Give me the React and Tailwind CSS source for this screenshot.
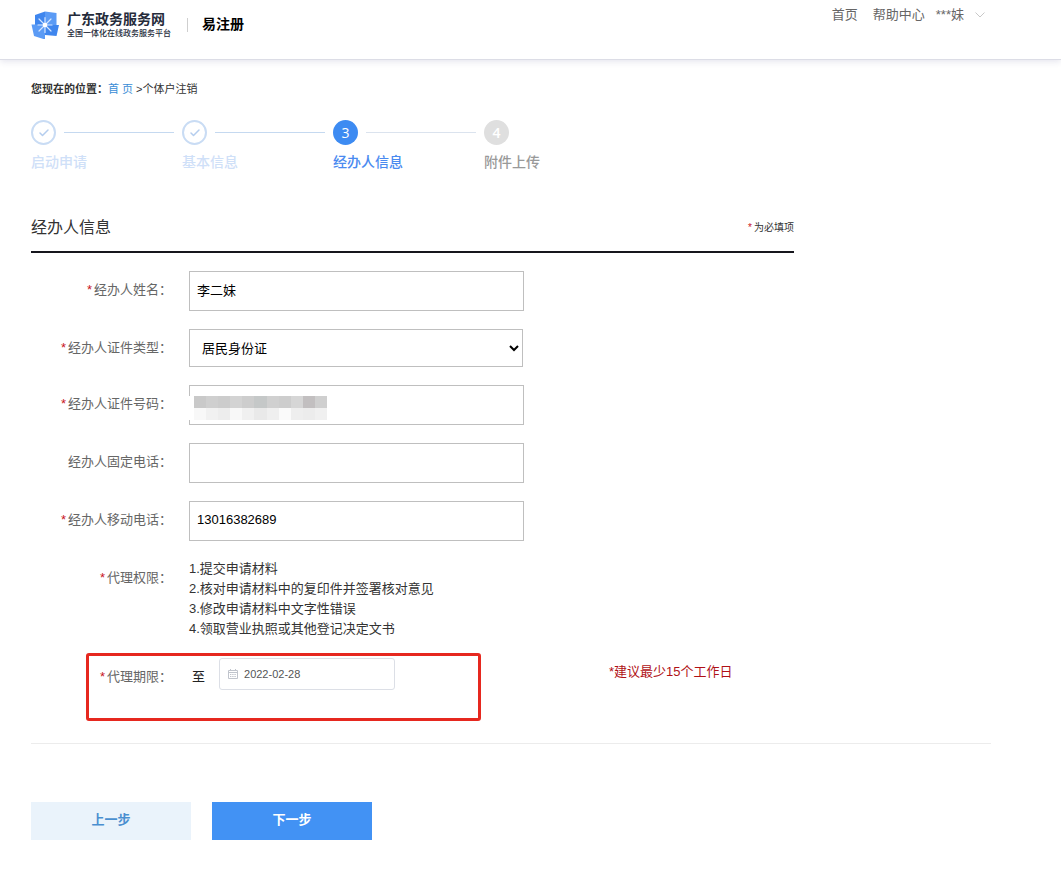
import { useState } from "react";
import { Check } from "lucide-react";
import clsx from "clsx";

const steps = [
  { title: "启动申请", status: "done" },
  { title: "基本信息", status: "done" },
  { title: "经办人信息", status: "current" },
  { title: "附件上传", status: "todo" },
];

const permissions = [
  "1.提交申请材料",
  "2.核对申请材料中的复印件并签署核对意见",
  "3.修改申请材料中文字性错误",
  "4.领取营业执照或其他登记决定文书",
];

// blocks that hide the certificate number
const maskCells = [
  "bg-[#c9c9c9]", "bg-[#cfcfcf]", "bg-[#cccccc]", "bg-[#d3d3d3]", "bg-[#cdcdcd]",
  "bg-[#c5c8c8]", "bg-[#d0d0d0]", "bg-[#cdcdcd]", "bg-[#d6d6d6]", "bg-[#c2bfc0]", "bg-[#cfcfcf]",
  "bg-[#f8f8f8]", "bg-[#f1f1f1]", "bg-[#ededed]", "bg-[#f8f8f8]", "bg-[#f0f0f0]",
  "bg-[#e9e9e9]", "bg-[#efefef]", "bg-[#fafafa]", "bg-[#eeeeee]", "bg-[#ececec]", "bg-[#f0f0f0]",
];

const inputClass =
  "block h-10 w-full max-w-[335px] border border-[#bfbfbf] bg-white px-[7px] pb-[3px] text-[13px] text-black outline-none";

function LogoMark() {
  return (
    <svg viewBox="0 0 28 28" className="h-7 w-7" aria-hidden="true">
      <path d="M4 4 14 .5V14H4z" fill="#3f86ee" />
      <path d="M14 .5 25.500 2v12H14z" fill="#5b9bf5" />
      <path d="M14 14h14l-2.500 11L14 24z" fill="#3f86ee" />
      <path d="M.5 13.500H14V28.500L3 25z" fill="#5b9bf5" />
      <path
        d="M14 6.500v15M7 14h14M8 8l12 12M20 8 8 20"
        stroke="#d5e6ff"
        strokeWidth="1.2"
        strokeLinecap="round"
      />
      <circle cx="14" cy="14" r="2.300" fill="#fff" />
    </svg>
  );
}

function CalendarIcon() {
  return (
    <svg viewBox="0 0 10 10" className="h-[10px] w-[10px] shrink-0" fill="none" stroke="#c0c4cc" aria-hidden="true">
      <path d="M.5 1.5h9v8h-9zM.5 3.5h9M2.5 0v2M7.5 0v2" />
      <path d="M2 5.5h6M2 7.5h6" strokeDasharray="1.4 .8" />
    </svg>
  );
}

function Header() {
  return (
    <header className="h-[60px] border-b border-[#dcdde6] bg-white shadow-[0_2px_6px_rgba(60,60,120,0.12)]">
      <div className="flex max-w-[985px] items-start justify-between pl-[31px]">
        <div className="flex items-center pt-[10px]">
          <LogoMark />
          <div className="ml-2 text-[#252b3a]">
            <div className="text-[14px] leading-[18px] font-bold">广东政务服务网</div>
            <div className="text-[8px] leading-3 font-medium">全国一体化在线政务服务平台</div>
          </div>
          <div className="ml-4 h-[14px] w-px bg-[#cfcfcf]" />
          <div className="ml-[14px] pb-[2px] text-[14px] leading-5 font-bold text-black">易注册</div>
        </div>

        <nav className="flex items-center gap-[15px] pt-[5px] text-[13px] leading-5 text-[#666]">
          <a href="#home">首页</a>
          <a href="#help">帮助中心</a>
          <button type="button" className="-ml-1 flex items-center gap-[11px]">
            ***妹
            <svg viewBox="0 0 10 6" className="h-[6px] w-[10px]" fill="none" stroke="#c8c8c8" aria-hidden="true">
              <path d="m.5.5 4.500 4.500L9.500.5" />
            </svg>
          </button>
        </nav>
      </div>
    </header>
  );
}

function Steps() {
  return (
    <ol className="mt-[22px] flex max-w-[604px]">
      {steps.map((step, i) => (
        <li key={step.title} className="min-w-0 flex-1">
          <div className="flex items-center gap-2">
            <span
              className={clsx(
                "flex h-[25px] w-[25px] shrink-0 items-center justify-center rounded-full font-['Open_Sans'] text-[14px]",
                step.status === "done" && "border-2 border-[#c9dcf4] text-[#b4cdee]",
                step.status === "current" && "bg-[#3d8bf2] text-white",
                step.status === "todo" && "bg-[#dfdfdf] font-semibold text-white"
              )}
            >
              {step.status === "done" ? <Check className="h-3 w-3" strokeWidth={3} /> : i + 1}
            </span>
            {i < steps.length - 1 && (
              <span
                className={clsx("mr-2 h-px flex-1", step.status === "done" ? "bg-[#c5d9f0]" : "bg-[#dbe3ee]")}
              />
            )}
          </div>
          <div
            className={clsx(
              "mt-[7px] text-[14px] leading-5 font-medium",
              step.status === "done" && "text-[#cfe0f8]",
              step.status === "current" && "text-[#4a8af0]",
              step.status === "todo" && "text-[#999]"
            )}
          >
            {step.title}
          </div>
        </li>
      ))}
    </ol>
  );
}

function Row({ label, htmlFor, required, children }) {
  return (
    <div className="flex items-start gap-[17px]">
      <label htmlFor={htmlFor} className="w-[141px] shrink-0 text-right text-[13px] leading-[38px] text-[#666]">
        {required && <span className="mr-[2px] text-[#c8161d]">*</span>}
        {label}：
      </label>
      <div className="min-w-0 flex-1">{children}</div>
    </div>
  );
}

export default function App() {
  const [formData, setFormData] = useState({
    name: "李二妹",
    certType: "居民身份证",
    certNo: "",
    phone: "",
    mobile: "13016382689",
    endDate: "2022-02-28",
  });

  const handleChange = (e) => {
    setFormData({
      ...formData,
      [e.target.name]: e.target.value,
    });
  };

  return (
    <div className="bg-white font-['Liberation_Sans','Noto_Sans_CJK_SC',sans-serif]">
      <Header />

      <main className="max-w-[991px] pt-5 pb-11 pl-[31px]">
        <div className="text-[11px] leading-[18px] text-[#333]">
          <span className="font-bold">您现在的位置：</span>
          <a href="#home" className="text-[#3a8dd6]">首 页</a>
          {" >个体户注销"}
        </div>

        <Steps />

        <form onSubmit={(e) => e.preventDefault()}>
          <div className="mt-[43px] flex max-w-[763px] items-center justify-between border-b-2 border-[#16161d] pb-[11px]">
            <h2 className="text-[16px] leading-[25px] text-[#333]">经办人信息</h2>
            <p className="text-[10px] text-[#333]">
              <span className="mr-[2px] text-[#c8161d]">*</span>为必填项
            </p>
          </div>

          <div className="mt-[18px] flex flex-col gap-[18px]">
            <Row label="经办人姓名" htmlFor="name" required>
              <input id="name" name="name" value={formData.name} onChange={handleChange} className={inputClass} />
            </Row>

            <Row label="经办人证件类型" htmlFor="certType" required>
              <select
                id="certType"
                name="certType"
                value={formData.certType}
                onChange={handleChange}
                className="block h-[38px] w-full max-w-[334px] border border-[#bfbfbf] bg-white px-2 text-[13px] text-black outline-none"
              >
                <option>居民身份证</option>
                <option>护照</option>
              </select>
            </Row>

            <Row label="经办人证件号码" htmlFor="certNo" required>
              <div className="relative">
                <input
                  id="certNo"
                  name="certNo"
                  value={formData.certNo}
                  onChange={handleChange}
                  className={inputClass}
                />
                <div className="absolute top-[11px] left-0 bg-white pl-[5px]">
                  <div className="grid w-[133px] grid-cols-11">
                    {maskCells.map((cell, i) => (
                      <span key={i} className={clsx("h-3", cell)} />
                    ))}
                  </div>
                </div>
              </div>
            </Row>

            <Row label="经办人固定电话" htmlFor="phone">
              <input id="phone" name="phone" value={formData.phone} onChange={handleChange} className={inputClass} />
            </Row>

            <Row label="经办人移动电话" htmlFor="mobile" required>
              <input id="mobile" name="mobile" value={formData.mobile} onChange={handleChange} className={inputClass} />
            </Row>

            <Row label="代理权限" required>
              <ul className="pb-px text-[13px] leading-5 text-[#333]">
                {permissions.map((item) => (
                  <li key={item}>{item}</li>
                ))}
              </ul>
            </Row>

            <div className="relative h-[67px]">
              <Row label="代理期限" htmlFor="endDate" required>
                <div className="flex items-start text-[13px]">
                  <span className="ml-[3px] leading-[38px] text-[#222]">至</span>
                  <div className="ml-[14px] flex h-8 w-44 shrink-0 items-center gap-[6px] rounded-[3px] border border-[#dcdfe6] px-2">
                    <CalendarIcon />
                    <input
                      id="endDate"
                      name="endDate"
                      value={formData.endDate}
                      onChange={handleChange}
                      className="w-full min-w-0 text-[11px] text-[#555] outline-none"
                    />
                  </div>
                  <p className="ml-[214px] leading-7 text-[#b01116]">*建议最少15个工作日</p>
                </div>
              </Row>
              <div className="pointer-events-none absolute -top-[5px] left-[55px] h-[68px] w-[395px] rounded-[3px] border-3 border-[#e6281f]" />
            </div>
          </div>

          <div className="mt-[18px] flex gap-[21px] border-t border-[#ececec] pt-[58px] text-[13px] font-bold">
            <button type="button" className="h-[38px] w-40 bg-[#eaf3fb] pb-[2px] text-[#4a8fd0]">
              上一步
            </button>
            <button type="submit" className="h-[38px] w-40 bg-[#4292f4] pb-[2px] text-white">
              下一步
            </button>
          </div>
        </form>
      </main>
    </div>
  );
}
